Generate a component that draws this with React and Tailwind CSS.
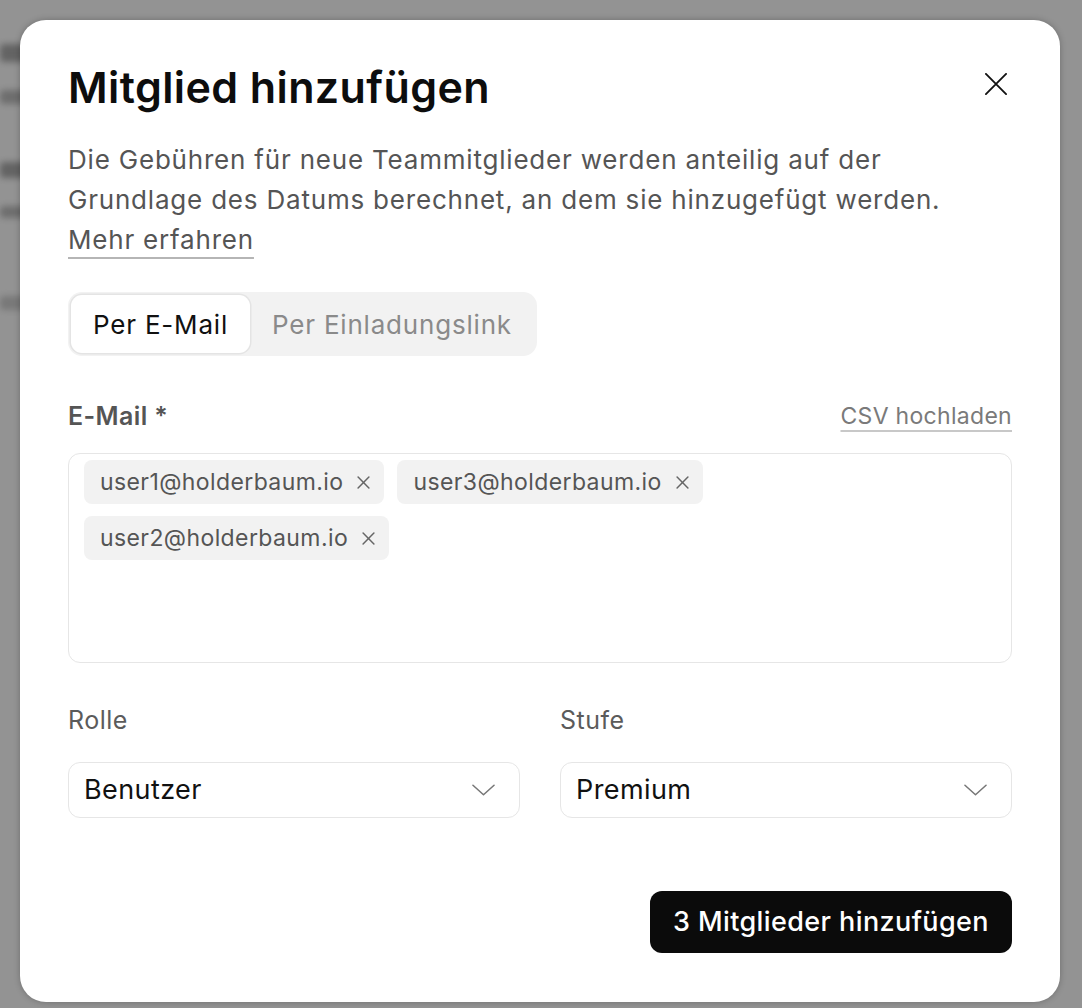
import { useState } from 'react'

const font = { fontFamily: 'Inter, "Noto Sans", sans-serif' }

function CloseIcon({ className }) {
  return (
    <svg viewBox="0 0 24 24" className={className} fill="none" stroke="currentColor" strokeWidth="2" strokeLinecap="round">
      <path d="M1 1 23 23M23 1 1 23" />
    </svg>
  )
}

function SmallX() {
  return (
    <svg viewBox="0 0 12 12" className="w-[13px] h-[13px]" fill="none" stroke="currentColor" strokeWidth="1.4" strokeLinecap="round">
      <path d="M1 1 11 11M11 1 1 11" />
    </svg>
  )
}

function Chevron() {
  return (
    <svg viewBox="0 0 24 12" className="w-[23px] h-[12px]" fill="none" stroke="currentColor" strokeWidth="1.6" strokeLinecap="round" strokeLinejoin="round">
      <path d="M1 1 12 11 23 1" />
    </svg>
  )
}

function Chip({ email }) {
  return (
    <span className="inline-flex items-center gap-[14px] h-[44px] pl-[16px] pr-[14px] rounded-[8px] bg-[#f2f2f2] text-[23px] text-[#555] tracking-[0.4px]">
      {email}
      <span className="text-[#666]"><SmallX /></span>
    </span>
  )
}

function SelectBox({ label, value }) {
  return (
    <div className="flex-1 flex flex-col">
      <div className="text-[25px] tracking-[0.5px] text-[#5b5b5b] h-[40px] leading-[40px]">{label}</div>
      <div className="mt-[22px] h-[56px] rounded-[12px] border-[1.5px] border-[#e6e6e6] flex items-center justify-between pl-[15px] pr-[24px]">
        <span className="text-[27px] tracking-[0.4px] text-[#111]">{value}</span>
        <span className="text-[#777]"><Chevron /></span>
      </div>
    </div>
  )
}

export default function App() {
  const [tab, setTab] = useState('email')
  const emails = ['user1@holderbaum.io', 'user3@holderbaum.io', 'user2@holderbaum.io']

  return (
    <div className="relative h-[1008px] w-full overflow-hidden bg-[#939393]" style={font}>
      {/* blurred page behind the overlay */}
      <div className="flex flex-col gap-[28px] pt-[44px] blur-[3px] opacity-60">
        <div className="h-[18px] w-[60px] bg-[#444] rounded" />
        <div className="h-[14px] w-[40px] bg-[#555] rounded" />
        <div className="h-[16px] w-[50px] bg-[#444] rounded mt-[30px]" />
        <div className="h-[12px] w-[40px] bg-[#555] rounded" />
        <div className="h-[14px] w-[30px] bg-[#666] rounded mt-[50px]" />
      </div>

      <div className="absolute inset-0 pl-[20px] pr-[22px] pt-[20px] pb-[6px]">
        <div className="h-full bg-white rounded-[26px] shadow-[0_0_6px_rgba(0,0,0,0.25)] px-[48px] pt-[48px] flex flex-col">
          <div className="flex items-start justify-between">
            <h2 className="text-[43px] leading-[38px] font-semibold text-[#0d0d0d] tracking-[0.4px]">Mitglied hinzufügen</h2>
            <button className="text-[#111] mt-[5px] mr-[5px]">
              <CloseIcon className="w-[22px] h-[22px]" />
            </button>
          </div>

          <p className="mt-[34px] text-[26px] leading-[40px] text-[#555] tracking-[0.8px]">
            Die Gebühren für neue Teammitglieder werden anteilig auf der Grundlage des Datums berechnet, an dem sie hinzugefügt werden.
            <br />
            <a className="underline decoration-[#b5b5b5] decoration-[2px] underline-offset-[8px]">Mehr erfahren</a>
          </p>

          <div className="mt-[32px] self-start flex p-[3px] rounded-[14px] bg-[#f2f2f2]">
            <button
              onClick={() => setTab('email')}
              className={`h-[58px] px-[22px] rounded-[11px] text-[26px] tracking-[0.8px] ${tab === 'email' ? 'bg-white text-[#111] shadow-[0_0_0_1.5px_#e4e4e4]' : 'text-[#8a8a8a]'}`}
            >
              Per E-Mail
            </button>
            <button
              onClick={() => setTab('link')}
              className={`h-[58px] px-[22px] rounded-[11px] text-[26px] tracking-[0.8px] ${tab === 'link' ? 'bg-white text-[#111] shadow-[0_0_0_1.5px_#e4e4e4]' : 'text-[#8a8a8a]'}`}
            >
              Per Einladungslink
            </button>
          </div>

          <div className="mt-[42px] h-[36px] flex items-center justify-between">
            <span className="text-[25px] leading-[36px] font-semibold text-[#555] tracking-[0.4px]">E-Mail *</span>
            <a className="text-[23px] leading-[36px] text-[#7a7a7a] tracking-[0.3px] underline decoration-[#c8c8c8] decoration-[2px] underline-offset-[6px]">CSV hochladen</a>
          </div>

          <div className="mt-[19px] h-[210px] rounded-[12px] border-[1.5px] border-[#e6e6e6] px-[15px] pt-[6px] flex flex-wrap content-start gap-x-[13px] gap-y-[12px]">
            {emails.map(e => <Chip key={e} email={e} />)}
          </div>

          <div className="mt-[37px] flex gap-[40px]">
            <SelectBox label="Rolle" value="Benutzer" />
            <SelectBox label="Stufe" value="Premium" />
          </div>

          <div className="mt-[73px] flex justify-end">
            <button className="h-[62px] px-[23px] rounded-[12px] bg-[#0b0b0b] text-white text-[27px] tracking-[0.4px] font-medium">
              3 Mitglieder hinzufügen
            </button>
          </div>
        </div>
      </div>
    </div>
  )
}
